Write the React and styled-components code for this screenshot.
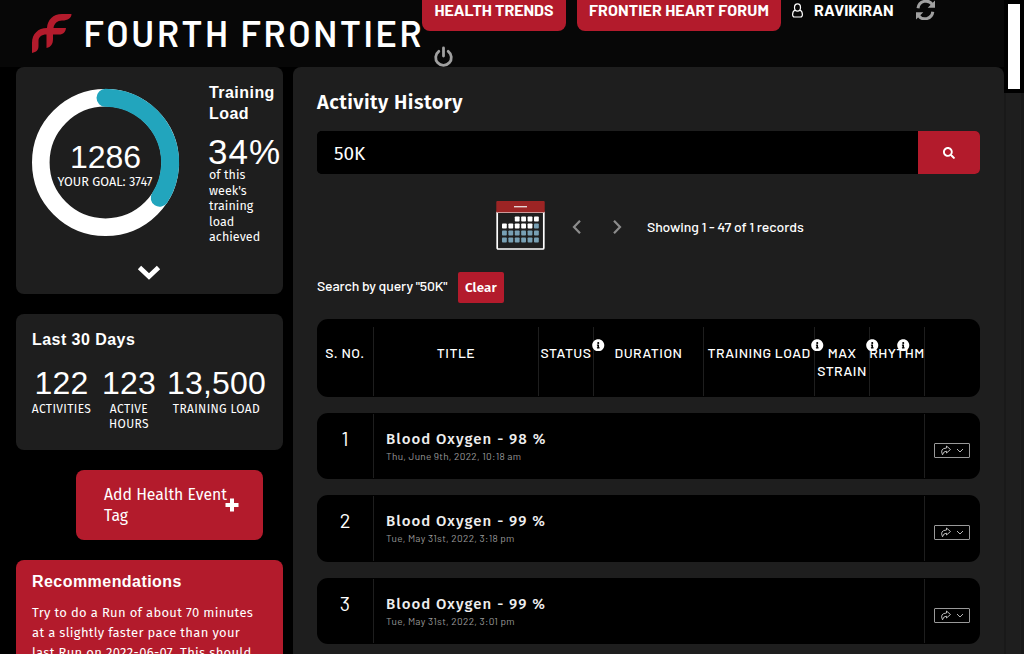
import React from "react";
import styled, { createGlobalStyle, css } from "styled-components";
import { FaSearch, FaInfoCircle } from "react-icons/fa";

const Global = createGlobalStyle`
  * { box-sizing: border-box; }
  html, body { margin: 0; height: 654px; overflow: hidden; background: #000; }
  body { color: #fff; font-family: "Fira Sans", "Noto Sans", sans-serif; font-size: 14px; }
  h1, h2, h3, p { margin: 0; }
`;

const barlow = css`font-family: Barlow, Roboto, sans-serif;`;
const fira = css`font-family: "Fira Sans", "Noto Sans", sans-serif;`;
const arial = css`font-family: Arial, "Liberation Sans", sans-serif;`;

const Page = styled.div`width: 1024px; height: 654px; overflow: hidden; display: grid; grid-template-columns: 1004px 20px;`;
const Content = styled.div`height: 654px; overflow: hidden;`;
const Header = styled.header`height: 67px; background: #070707; display: flex; padding-left: 30px;`;
const Logo = styled.svg`width: 392px; height: 67px; flex: none; overflow: visible;`;
const Nav = styled.nav`${barlow} display: flex; flex-wrap: wrap; align-items: flex-start; align-content: flex-start; font-weight: 700; font-size: 16px; width: 540px;`;
const NavButton = styled.a`
  display: flex; justify-content: center; white-space: nowrap; width: ${p => p.$width}px; height: 31px; line-height: 20px; letter-spacing: ${p => p.$spacing}px;
  margin-right: ${p => p.$gap}px; border-radius: 0 0 8px 8px; background: #b31b2c;
`;
const User = styled.span`display: flex; line-height: 20px; gap: 10px; width: 113px; height: 46px; letter-spacing: -0.1px; svg { margin-top: 3px; }`;
const NavIcon = styled.span`display: flex; height: ${p => p.$height || 46}px; margin-left: 11px;`;
const Columns = styled.div`display: grid; grid-template-columns: 267px 711px; column-gap: 10px; padding-left: 16px;`;
const Sidebar = styled.aside`display: flex; flex-direction: column; gap: 20px;`;
const Card = styled.section`background: #1e1e1e; border-radius: 8px; height: ${p => p.$height}px; padding: 0 16px; overflow: hidden;`;
const LoadCard = styled(Card)`padding-top: 15px;`;
const LoadRow = styled.div`display: flex; height: 177px; gap: 30px;`;
const Gauge = styled.svg`width: 147px; height: 160px; flex: none; overflow: visible;`;
const LoadInfo = styled.div`width: 72px; flex: none; font-size: 12.5px; line-height: 15.5px; letter-spacing: 0.05px;`;
const CardTitle = styled.h2`${arial} font-size: 16px; font-weight: 700; line-height: 21px; letter-spacing: 0.45px;`;
const Percent = styled.div`${arial} font-size: 35px; line-height: 38px; margin-top: 9px; margin-left: -1px; margin-bottom: -4px; letter-spacing: 1px; white-space: nowrap;`;
const Expand = styled.div`display: flex; justify-content: center; padding: 5px 1px 0 0;`;
const DaysCard = styled(Card)`padding-top: 15px;`;
const Stats = styled.div`display: flex; gap: 12px; margin-top: 14px;`;
const Stat = styled.div`width: ${p => p.$width}px; flex: none; text-align: center; font-size: 12px; line-height: 15px; letter-spacing: 0.35px; display: flex; flex-direction: column; align-items: center; white-space: nowrap;`;
const StatNumber = styled.div`${arial} font-size: 32px; line-height: 38px; letter-spacing: 0.2px; white-space: nowrap;`;
const AddButton = styled.button`
  ${fira} width: 187px; height: 70px; margin-left: 60px; border: 0; border-radius: 8px; background: #b31b2c; color: #fff;
  padding: 0 24px 1px 28px; display: flex; align-items: center; text-align: left; font-size: 15.8px; line-height: 21px;
  span { width: 121px; flex: none; white-space: nowrap; }
  svg { flex: none; }
`;
const Recommend = styled.section`height: 110px; border-radius: 8px 8px 0 0; background: #b31b2c; padding: 11px 16px;`;
const Advice = styled.p`margin-top: 11px; font-size: 13px; line-height: 20px; letter-spacing: 0.32px; white-space: nowrap;`;
const Main = styled.main`height: 600px; background: #1e1e1e; border-radius: 8px 8px 0 0; padding: 22px 24px 0;`;
const PageTitle = styled.h1`font-size: 20px; font-weight: 600; line-height: 26px; letter-spacing: 0.45px;`;
const SearchBar = styled.form`margin-top: 16px; height: 43px; display: flex; border-radius: 5px; overflow: hidden; background: #000;`;
const SearchInput = styled.input`${fira} width: 601px; border: 0; outline: 0; padding: 2px 17px 0; background: #000; color: #fff; font-size: 19px;`;
const SearchButton = styled.button`width: 62px; border: 0; background: #b31b2c; color: #fff; display: flex; align-items: center; justify-content: center; font-size: 12px; padding: 0;`;
const Pager = styled.div`${barlow} display: flex; align-items: center; margin-top: 26px; margin-left: 179px; height: 51px; font-size: 14px; font-weight: 500;`;
const Arrows = styled.div`display: flex; margin: 3px 0 0 12px;`;
const PagerText = styled.span`margin: 1px 0 0 10px; letter-spacing: -0.08px; white-space: nowrap;`;
const Query = styled.div`${barlow} display: flex; margin-top: 21px; height: 31px; font-size: 14px; font-weight: 500; line-height: 28px; letter-spacing: -0.12px; span { width: 141px; white-space: nowrap; }`;
const Clear = styled.button`${fira} width: 46px; height: 31px; padding: 0; border: 0; border-radius: 2px; background: #b31b2c; color: #fff; font-weight: 600; font-size: 13.3px; letter-spacing: 0.2px;`;
const TableHead = styled.div`
  ${barlow} height: 78px; margin-top: 16px; padding: 8px 0 1px; border-radius: 11px; background: #000; display: grid;
  grid-template-columns: 57px 165px 55px 110px 111px 55px 55px 55px; font-size: 14px; font-weight: 500; letter-spacing: 0.45px; line-height: 18px;
`;
const HeadCell = styled.div`
  position: relative; padding-top: 17px; display: flex; justify-content: center; text-align: center; border-right: 1px solid #1e1e1e; white-space: nowrap;
  &:last-child { border: 0; }
`;
const Info = styled(FaInfoCircle)`position: absolute; top: 11.5px; left: ${p => p.$left}px; font-size: 12.5px; z-index: 1;`;
const Row = styled.article`${barlow} height: ${p => p.$height}px; margin-top: 16px; padding: 1px 0; border-radius: 11px; background: #000; display: grid; grid-template-columns: 57px 551px 55px;`;
const RowNumber = styled.div`border-right: 1px solid #1e1e1e; text-align: center; font-size: 20px; line-height: 24px; padding-top: 12px;`;
const RowBody = styled.div`border-right: 1px solid #1e1e1e; padding: 16px 12px 0;`;
const RowTitle = styled.h3`${fira} color: #eee; font-size: 15px; font-weight: 500; line-height: 18px; letter-spacing: 1.05px;`;
const RowDate = styled.p`color: #999; font-size: 10px; font-weight: 400; line-height: 14px; margin-top: 1px; letter-spacing: 0.3px;`;
const ShareCell = styled.div`padding: 29px 10px 0 9px;`;
const Share = styled.button`width: 36px; height: 15px; padding: 0; border: 1px solid #999; border-radius: 1px; background: #000; color: #ccc; display: flex; align-items: center; justify-content: center;`;
const ScrollTrack = styled.div`background: #1e1e1e; height: 654px; border-left: 2px solid #191919; border-right: 3px solid #191919;`;
const ScrollThumb = styled.div`margin: 0 -3px 0 -2px; height: 93px; border: 4px solid #000; background: #fff;`;

function CalendarIcon() {
  const dots = [];
  for (let r = 0; r < 4; r++) for (let c = 0; c < 6; c++) {
    if (r === 0 && c < 2) continue;
    dots.push(<rect key={`${r}-${c}`} x={6 + c * 6.4} y={16.5 + r * 7} width="4.8" height="5" rx="0.8" fill={r === 0 || (r === 1 && c < 5) ? "#fff" : "#78a0b4"} />);
  }
  return <svg width="49" height="51" viewBox="0 0 49 51">
    <rect x="1.2" y="11.5" width="46.6" height="37.5" rx="1" fill="none" stroke="#fff" strokeWidth="1.7" />
    <path d="M0.300 2q0-1 1-1h46.400q1 0 1 1v10H0.300z" fill="#9c2424" />
    <path d="M0.500 12.500h48" stroke="#c99" /><path d="M18 6.700h13" stroke="#e5d5d5" strokeWidth="1.400" />{dots}
  </svg>;
}

function Arrow({ right }) {
  return <svg width="40" height="20" viewBox="0 0 40 20"><path d={right ? "M17 3.800l6 6.200-6 6.200" : "M23 3.800l-6 6.200 6 6.200"} fill="none" stroke="#8c8c8c" strokeWidth="2.200" /></svg>;
}

function RefreshIcon() {
  return <svg width="22" height="20" viewBox="0 0 22 20" fill="none" stroke="#a0a0a0" strokeWidth="3">
    <path d="M3 8.200A8 8 0 0 1 17.500 4.600M17.800 11.800A8 8 0 0 1 3.300 15.400" />
    <path d="M20 0.500v7.300h-7.300zM1 19.500v-7.300h7.300z" fill="#a0a0a0" stroke="none" />
  </svg>;
}

function PowerIcon() {
  return <svg width="21" height="22" viewBox="0 0 21 22" fill="none" stroke="#a0a0a0" strokeWidth="2.800" strokeLinecap="round">
    <path d="M5.800 5.300A7.800 7.800 0 1 0 15.200 5.300M10.500 2v8" />
  </svg>;
}

function Head({ label, info = [] }) {
  return <HeadCell><span>{label}</span>{info.map(x => <Info key={x} $left={x} />)}</HeadCell>;
}

const rows = [
  { n: 1, title: "Blood Oxygen - 98 %", date: "Thu, June 9th, 2022, 10:18 am", height: 66 },
  { n: 2, title: "Blood Oxygen - 99 %", date: "Tue, May 31st, 2022, 3:18 pm", height: 67 },
  { n: 3, title: "Blood Oxygen - 99 %", date: "Tue, May 31st, 2022, 3:01 pm", height: 66 },
];

export default function App() {
  return <Page><Global />
    <Content>
      <Header>
        <Logo viewBox="30 0 392 67">
          <path d="M71.500 14H62C53 14 47.500 20 47 28C38 28 32 34 32 43V53C36.500 52 38.500 50 38.500 46V41C38.500 37 41.500 34.500 46.500 34.500V48C51 47 53 44 53 39V34.500H59C63.500 34.500 65.500 32 66 28H53.500C54 23.500 57.500 20.500 62 20.500C68 20.500 71.500 18 71.500 14Z" fill="#b31b2c" />
          <text x="83.500" y="46.500" fill="#fff" fontFamily="Barlow, Roboto, sans-serif" fontWeight="600" fontSize="36" textLength="338" lengthAdjust="spacing">FOURTH FRONTIER</text>
        </Logo>
        <Nav>
          <NavButton $width={144} $gap={11} $spacing={0}>HEALTH TRENDS</NavButton>
          <NavButton $width={204} $gap={10} $spacing={0.1}>FRONTIER HEART FORUM</NavButton>
          <User>
            <svg width="13" height="15" viewBox="0 0 13 15" fill="none" stroke="#fff" strokeWidth="1.200"><ellipse cx="6.500" cy="4.500" rx="3" ry="3.600" /><path d="M4 7.300Q1.700 8 1.600 11.500Q1.600 14 3.500 14h6q1.900 0 1.900-2.500Q11.300 8 9 7.300" /></svg>
            RAVIKIRAN
          </User>
          <NavIcon><RefreshIcon /></NavIcon>
          <NavIcon $height={22}><PowerIcon /></NavIcon>
        </Nav>
      </Header>
      <Columns>
        <Sidebar>
          <LoadCard $height={227}>
            <LoadRow>
              <Gauge viewBox="0 0 147 160">
                <circle cx="73.500" cy="80.500" r="64.700" fill="none" stroke="#fff" strokeWidth="17.600" />
                <path d="M73.500 15.800A64.700 64.700 0 0 1 127.700 115.800" fill="none" stroke="#22a5bd" strokeWidth="18" strokeLinecap="round" />
                <text x="73.500" y="86" textAnchor="middle" fill="#fff" fontFamily="Arial, Liberation Sans, sans-serif" fontSize="32">1286</text>
                <text x="73" y="104" textAnchor="middle" fill="#fff" fontFamily="Fira Sans, Noto Sans, sans-serif" fontSize="12" textLength="95" lengthAdjust="spacingAndGlyphs">YOUR GOAL: 3747</text>
              </Gauge>
              <LoadInfo><CardTitle>Training Load</CardTitle><Percent>34%</Percent>of this<br />week's<br />training<br />load<br />achieved</LoadInfo>
            </LoadRow>
            <Expand><svg width="24" height="16" viewBox="0 0 24 16"><path d="M2.500 3.500l9.500 9 9.500-9" fill="none" stroke="#fff" strokeWidth="4.800" /></svg></Expand>
          </LoadCard>
          <DaysCard $height={136}>
            <CardTitle>Last 30 Days</CardTitle>
            <Stats>
              <Stat $width={59}><StatNumber>122</StatNumber>ACTIVITIES</Stat>
              <Stat $width={52}><StatNumber>123</StatNumber><span>ACTIVE<br />HOURS</span></Stat>
              <Stat $width={99}><StatNumber>13,500</StatNumber>TRAINING LOAD</Stat>
            </Stats>
          </DaysCard>
          <AddButton><span>Add Health Event<br />Tag</span><svg width="14" height="14" viewBox="0 0 14 14"><path d="M7 .5v13M.5 7h13" stroke="#fff" strokeWidth="4" /></svg></AddButton>
          <Recommend><CardTitle>Recommendations</CardTitle><Advice>Try to do a Run of about 70 minutes<br />at a slightly faster pace than your<br />last Run on 2022-06-07. This should</Advice></Recommend>
        </Sidebar>
        <Main>
          <PageTitle>Activity History</PageTitle>
          <SearchBar><SearchInput defaultValue="50K" /><SearchButton type="button"><FaSearch /></SearchButton></SearchBar>
          <Pager><CalendarIcon /><Arrows><Arrow /><Arrow right /></Arrows><PagerText>Showing 1 - 47 of 1 records</PagerText></Pager>
          <Query><span>Search by query "50K"</span><Clear>Clear</Clear></Query>
          <TableHead>
            <Head label="S. NO." /><Head label="TITLE" /><Head label="STATUS" info={[53]} /><Head label="DURATION" /><Head label="TRAINING LOAD" info={[107]} />
            <Head label={<>MAX<br />STRAIN</>} info={[51]} /><Head label="RHYTHM" info={[27]} /><Head label="" />
          </TableHead>
          {rows.map(r => <Row key={r.n} $height={r.height}>
            <RowNumber>{r.n}</RowNumber><RowBody><RowTitle>{r.title}</RowTitle><RowDate>{r.date}</RowDate></RowBody>
            <ShareCell><Share><svg width="28" height="13" viewBox="0 0 28 13" fill="none" stroke="#ccc" strokeWidth="0.900"><path d="M8.500 2l4 3.500-4 3.500V7.200Q5.500 7 4.500 10.800Q1.500 4.500 8.500 4zM19 5l3 3 3-3" /></svg></Share></ShareCell>
          </Row>)}
        </Main>
      </Columns>
    </Content>
    <ScrollTrack><ScrollThumb /></ScrollTrack>
  </Page>;
}
